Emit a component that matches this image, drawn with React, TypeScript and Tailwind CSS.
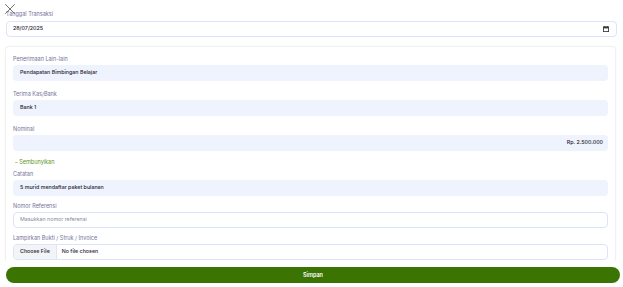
import { X } from "lucide-react"

const label = "text-[5.5px] leading-[8px] text-[#75729a]"
const filled = "flex h-4 items-center rounded-[4px] bg-[#eef3fd] px-[7px] text-[5.3px] font-medium text-[#1f2333]"

function Calendar() {
  return (
    <svg width="6" height="6" viewBox="0 0 7 7" className="text-[#3a3a3a]">
      <rect x="0.5" y="1" width="6" height="5.5" fill="none" stroke="currentColor" strokeWidth="1" />
      <rect x="0.5" y="1" width="6" height="1.8" fill="currentColor" />
      <rect x="1.6" y="0" width="0.9" height="1.5" fill="currentColor" />
      <rect x="4.5" y="0" width="0.9" height="1.5" fill="currentColor" />
    </svg>
  )
}

export default function App() {
  return (
    <div className="relative flex h-[287px] w-[623px] flex-col overflow-hidden bg-white font-['Inter',sans-serif]">
      {/* Close */}
      <button className="absolute left-[1px] top-[0px] text-[#555]">
        <X size={18} strokeWidth={1.1} />
      </button>

      {/* Scroll area */}
      <div className="flex-1 overflow-hidden">
        <div className="ml-[6px] mr-[6px] pt-[10px]">
          <div className={label}>Tanggal Transaksi</div>
          <div className="mt-[3px] flex h-4 items-center justify-between rounded-[4px] border border-[#dbe4fb] bg-white pl-[6px] pr-[7px] text-[5.3px] font-medium text-[#1f2333]">
            <span>28/07/2025</span>
            <Calendar />
          </div>
        </div>

        <div className="ml-[5px] mr-[7px] mt-[9px] rounded-[4px] border border-[#f1f1f4] bg-white px-[7px] pt-[8px] pb-[10px] shadow-[0_0_2px_rgba(0,0,0,0.05)]">
          <div className={label}>Penerimaan Lain-lain</div>
          <div className={`${filled} mt-[2px]`}>Pendapatan Bimbingan Belajar</div>

          <div className={`${label} mt-[9px]`}>Terima Kas/Bank</div>
          <div className={`${filled} mt-[2px]`}>Bank 1</div>

          <div className={`${label} mt-[9px]`}>Nominal</div>
          <div className={`${filled} mt-[2px] justify-end pr-[5px]`}>Rp. 2.500.000</div>

          <button className="mt-[7px] block pl-[2px] text-[5.5px] leading-[8px] text-[#5a9422]">– Sembunyikan</button>

          <div className={`${label} mt-[4px]`}>Catatan</div>
          <div className={`${filled} mt-[2px]`}>5 murid mendaftar paket bulanan</div>

          <div className={`${label} mt-[6px]`}>Nomor Referensi</div>
          <div className="mt-[2px] flex h-4 items-center rounded-[4px] border border-[#dbe4fb] bg-white px-[6px] text-[5.3px] text-[#8a88a3]">
            Masukkan nomor referensi
          </div>

          <div className={`${label} mt-[6px]`}>Lampirkan Bukti / Struk / Invoice</div>
          <div className="mt-[2px] flex h-4 items-center overflow-hidden rounded-[4px] border border-[#dbe4fb] bg-white text-[5.3px] font-medium text-[#1f2333]">
            <span className="flex h-full items-center border-r border-[#dbe4fb] bg-[#f3f4f6] px-[6px]">Choose File</span>
            <span className="pl-[5px]">No file chosen</span>
          </div>
        </div>
      </div>

      {/* Footer */}
      <div className="h-[26px] shrink-0 bg-white pt-[6px]">
        <button className="ml-[6px] mr-[3px] flex h-4 w-[614px] items-center justify-center rounded-full bg-[#3b7402] text-[5.5px] font-semibold text-white">
          Simpan
        </button>
      </div>
    </div>
  )
}
